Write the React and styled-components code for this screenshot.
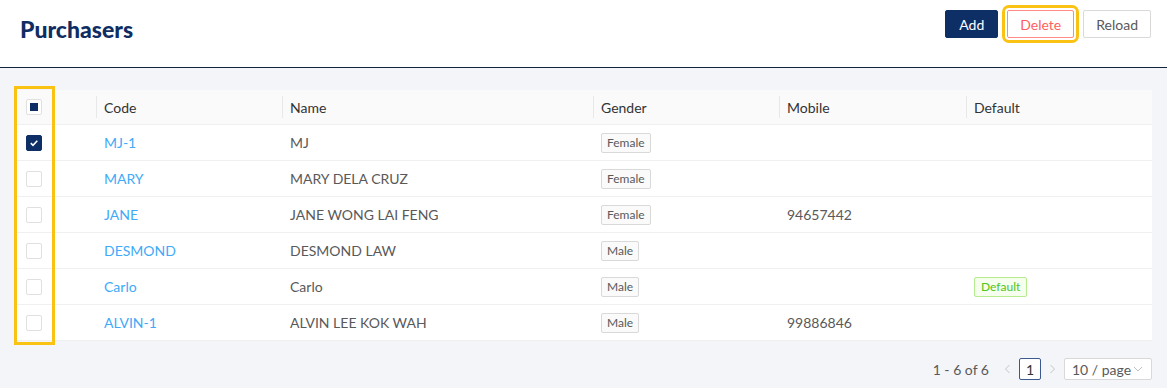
import React from "react";
import styled, { createGlobalStyle } from "styled-components";

const GlobalStyle = createGlobalStyle`
  body {
    margin: 0;
    background: #f4f5f9;
    font-family: Lato, "Liberation Sans", sans-serif;
    font-size: 14px;
    color: #595959;
  }
`;

const NAVY = "#0d2f66";
const HILITE = "#fac314";

const Header = styled.header`
  display: flex;
  justify-content: space-between;
  align-items: flex-start;
  height: 68px;
  padding: 10px 16px 0 20px;
  box-sizing: border-box;
  background: #fff;
  border-bottom: 1px solid #13233b;
`;

const Title = styled.h1`
  margin: 4px 0 0;
  font-size: 23px;
  line-height: 30px;
  font-weight: 900;
  color: #0f2d63;
`;

const Actions = styled.div`
  display: flex;
  gap: 9px;
`;

const Button = styled.button`
  height: 28px;
  padding: 0 ${(p) => (p.$variant === "primary" ? 13 : 12)}px;
  font-family: inherit;
  font-size: 14px;
  border-radius: 2px;
  cursor: pointer;
  border: 1px solid
    ${(p) => (p.$variant === "primary" ? NAVY : p.$variant === "danger" ? "#ff8a88" : "#d9d9d9")};
  background: ${(p) => (p.$variant === "primary" ? NAVY : "#fff")};
  color: ${(p) => (p.$variant === "primary" ? "#fff" : p.$variant === "danger" ? "#ff5f5f" : "#595959")};
  outline: ${(p) => (p.$marked ? `3px solid ${HILITE}` : "none")};
  outline-offset: 2px;
`;

const Body = styled.main`
  padding: 22px 15px 10px 16px;
`;

const Table = styled.div`
  position: relative;
  background: #fff;
`;

const Row = styled.div`
  display: grid;
  grid-template-columns: 80px 186px 311px 186px 187px 1fr;
  height: ${(p) => (p.$head ? 35 : 36)}px;
  background: ${(p) => (p.$head ? "#fafafa" : "#fff")};
  border-bottom: 1px solid #f0f0f0;
  box-sizing: border-box;
  color: ${(p) => (p.$head ? "#333" : "#595959")};
`;

const Cell = styled.div`
  position: relative;
  display: flex;
  align-items: center;
  padding: 0 8px;
  color: ${(p) => (p.$link ? "#40aaf8" : "inherit")};
  white-space: nowrap;

  &::before {
    content: "";
    display: ${(p) => (p.$divider ? "block" : "none")};
    position: absolute;
    left: 0;
    top: 50%;
    width: 1px;
    height: 22px;
    margin-top: -11px;
    background: #e8e8e8;
  }
`;

const CheckCell = styled(Cell)`
  padding: 0 0 0 10px;
`;

const Box = styled.span`
  display: inline-flex;
  align-items: center;
  justify-content: center;
  width: 16px;
  height: 16px;
  box-sizing: border-box;
  border-radius: 2px;
  border: 1px solid ${(p) => (p.$checked ? NAVY : "#e0e0e0")};
  background: ${(p) => (p.$checked ? NAVY : "#fff")};

  &::after {
    content: "";
    display: ${(p) => (p.$partial ? "block" : "none")};
    width: 8px;
    height: 8px;
    background: ${NAVY};
  }
`;

const Tag = styled.span`
  display: inline-block;
  height: 20px;
  line-height: 18px;
  padding: 0 ${(p) => (p.$green ? 6 : 5)}px;
  font-size: 12px;
  box-sizing: border-box;
  border-radius: 2px;
  border: 1px solid ${(p) => (p.$green ? "#b7eb8f" : "#d9d9d9")};
  background: ${(p) => (p.$green ? "#f6ffed" : "#fafafa")};
  color: ${(p) => (p.$green ? "#52c41a" : "#595959")};
`;

const Marker = styled.div`
  position: absolute;
  left: -2px;
  top: -4px;
  width: 41px;
  height: 259px;
  box-sizing: border-box;
  border: 3px solid ${HILITE};
  pointer-events: none;
`;

const Pager = styled.div`
  display: flex;
  justify-content: flex-end;
  align-items: center;
  margin-top: 17px;
  color: #595959;
  white-space: nowrap;
`;

const Total = styled.span`
  margin-right: 8px;
`;

const Arrow = styled.span`
  display: inline-flex;
  align-items: center;
  justify-content: center;
  width: 22px;
  height: 22px;
`;

const PageBox = styled.span`
  width: 22px;
  height: 22px;
  box-sizing: border-box;
  display: inline-flex;
  align-items: center;
  justify-content: center;
  border: 1px solid #3c5a8f;
  border-radius: 2px;
  color: #333;
  background: #fff;
`;

const Select = styled.span`
  display: inline-flex;
  align-items: center;
  justify-content: space-between;
  flex: none;
  width: 88px;
  height: 22px;
  box-sizing: border-box;
  margin-left: 1px;
  padding: 0 8px 0 7px;
  border: 1px solid #d9d9d9;
  border-radius: 2px;
  background: #fff;
`;

const Check = () => (
  <svg width="10" height="10" viewBox="0 0 10 10">
    <path d="M1.8 5.2 L4 7.3 L8.3 2.8" stroke="#fff" strokeWidth="1.6" fill="none" />
  </svg>
);

const Chevron = ({ dir = "down", color = "#bfbfbf" }) => (
  <svg width="10" height="10" viewBox="0 0 10 10">
    {dir === "down" && <path d="M1 3 L5 7 L9 3" stroke={color} fill="none" />}
    {dir === "left" && <path d="M6.5 1 L2.5 5 L6.5 9" stroke={color} fill="none" />}
    {dir === "right" && <path d="M3.5 1 L7.5 5 L3.5 9" stroke={color} fill="none" />}
  </svg>
);

const purchasers = [
  { code: "MJ-1", name: "MJ", gender: "Female", mobile: "", checked: true },
  { code: "MARY", name: "MARY DELA CRUZ", gender: "Female", mobile: "" },
  { code: "JANE", name: "JANE WONG LAI FENG", gender: "Female", mobile: "94657442" },
  { code: "DESMOND", name: "DESMOND LAW", gender: "Male", mobile: "" },
  { code: "Carlo", name: "Carlo", gender: "Male", mobile: "", isDefault: true },
  { code: "ALVIN-1", name: "ALVIN LEE KOK WAH", gender: "Male", mobile: "99886846" },
];

export default function App() {
  return (
    <>
      <GlobalStyle />
      <Header>
        <Title>Purchasers</Title>
        <Actions>
          <Button $variant="primary">Add</Button>
          <Button $variant="danger" $marked>Delete</Button>
          <Button>Reload</Button>
        </Actions>
      </Header>
      <Body>
        <Table>
          <Row $head>
            <CheckCell>
              <Box $partial />
            </CheckCell>
            <Cell $divider>Code</Cell>
            <Cell $divider>Name</Cell>
            <Cell $divider>Gender</Cell>
            <Cell $divider>Mobile</Cell>
            <Cell $divider>Default</Cell>
          </Row>
          {purchasers.map((p) => (
            <Row key={p.code}>
              <CheckCell>
                <Box $checked={p.checked}>{p.checked && <Check />}</Box>
              </CheckCell>
              <Cell $link>{p.code}</Cell>
              <Cell>{p.name}</Cell>
              <Cell>
                <Tag>{p.gender}</Tag>
              </Cell>
              <Cell>{p.mobile}</Cell>
              <Cell>{p.isDefault && <Tag $green>Default</Tag>}</Cell>
            </Row>
          ))}
          <Marker />
        </Table>
        <Pager>
          <Total>1 - 6 of 6</Total>
          <Arrow>
            <Chevron dir="left" color="#c4c4c4" />
          </Arrow>
          <PageBox>1</PageBox>
          <Arrow>
            <Chevron dir="right" color="#c4c4c4" />
          </Arrow>
          <Select>
            10 / page
            <Chevron />
          </Select>
        </Pager>
      </Body>
    </>
  );
}
